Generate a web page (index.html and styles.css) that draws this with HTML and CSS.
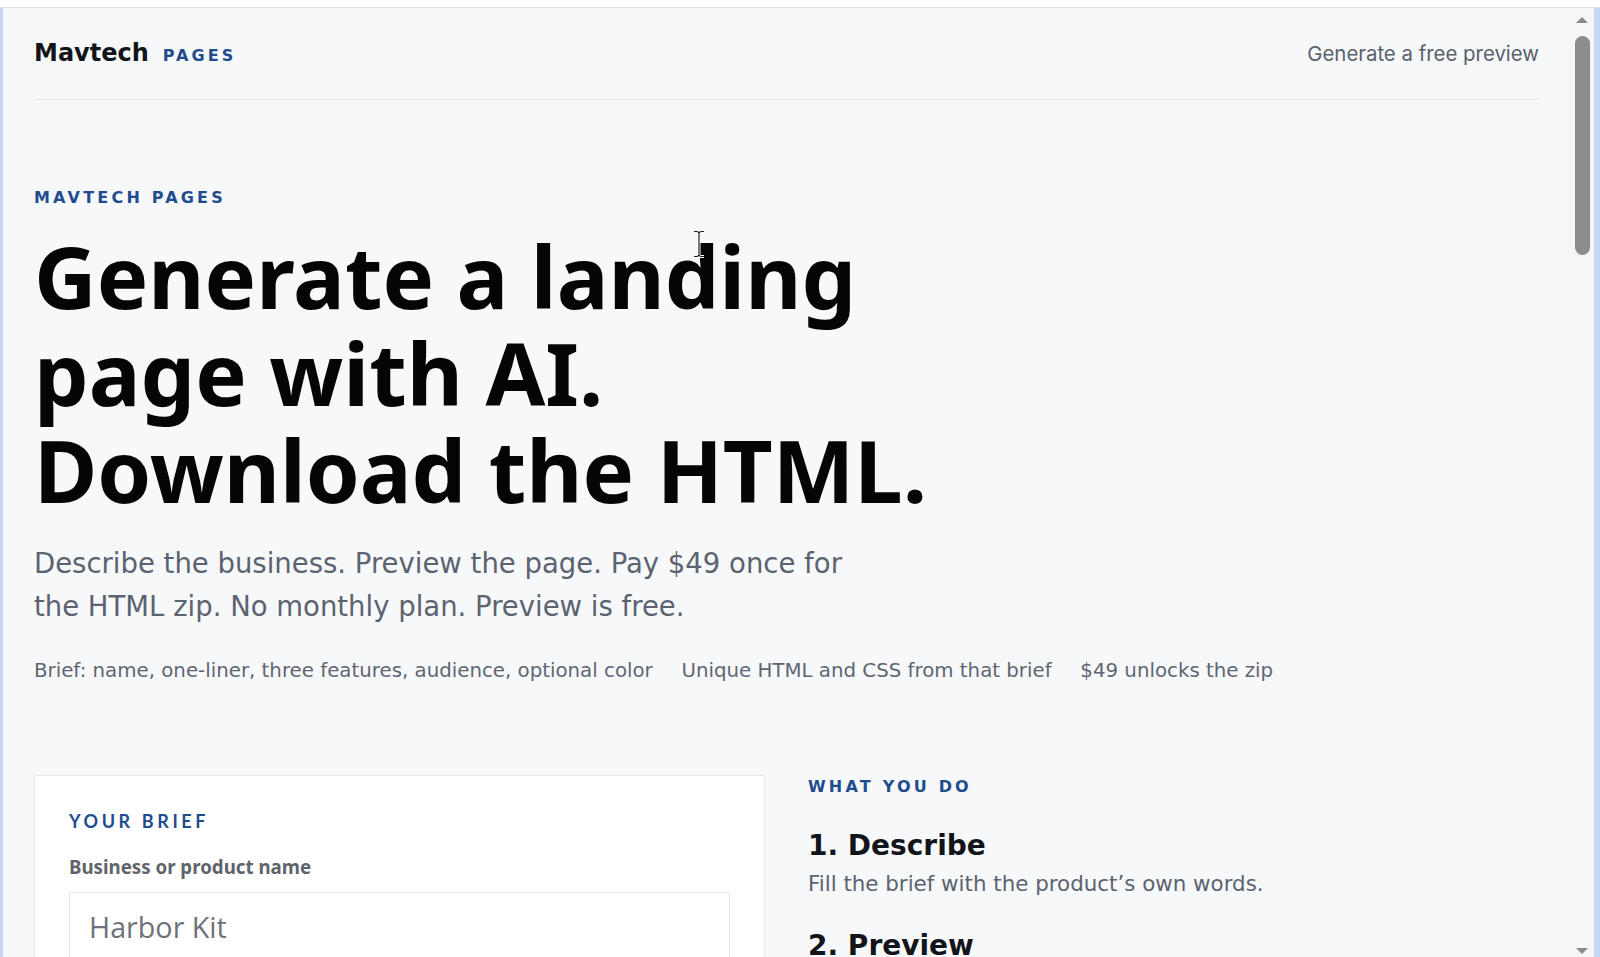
FILE: index.html
```html
<!DOCTYPE html>
<html lang="en">
<head>
<meta charset="utf-8">
<title>Mavtech Pages</title>
<link rel="stylesheet" href="styles.css">
</head>
<body>
<div class="frame">
  <div class="topbar"></div>
  <div class="window">
    <div class="edge-left"></div>
    <div class="viewport">
      <div class="page">
        <header class="site-header">
          <div class="brand">
            <span class="brand-name">Mavtech</span>
            <span class="brand-tag">PAGES</span>
          </div>
          <a class="nav-link" href="#brief">Generate a free preview</a>
        </header>

        <section class="hero">
          <p class="eyebrow">MAVTECH PAGES</p>
          <h1 class="headline">Generate a landing<br>page with AI.<br>Download the HTML.</h1>
          <p class="lead">Describe the business. Preview the page. Pay $49 once for the HTML zip. No monthly plan. Preview is free.</p>
          <ul class="chips">
            <li>Brief: name, one-liner, three features, audience, optional color</li>
            <li>Unique HTML and CSS from that brief</li>
            <li>$49 unlocks the zip</li>
          </ul>
        </section>

        <section class="work">
          <form class="card" id="brief">
            <p class="card-eyebrow">YOUR BRIEF</p>
            <label class="field-label" for="name">Business or product name</label>
            <input class="field-input" id="name" type="text" placeholder="Harbor Kit">
          </form>
          <div class="steps">
            <p class="eyebrow">WHAT YOU DO</p>
            <h3 class="step-title">1. Describe</h3>
            <p class="step-text">Fill the brief with the product’s own words.</p>
            <h3 class="step-title">2. Preview</h3>
          </div>
        </section>
      </div>
      <svg class="cursor" width="14" height="28" viewBox="0 0 14 28" aria-hidden="true">
        <path d="M2 1.5h3.5L7 3l1.5-1.5H12M7 3v22M2 26.5h3.5L7 25l1.5 1.5H12" fill="none" stroke="#fff" stroke-width="3"/>
        <path d="M2 1.5h3.5L7 3l1.5-1.5H12M7 3v22M2 26.5h3.5L7 25l1.5 1.5H12" fill="none" stroke="#222" stroke-width="1.2"/>
      </svg>
    </div>
    <div class="scrollbar" aria-hidden="true">
      <span class="arrow-up"></span>
      <span class="thumb"></span>
      <span class="track"></span>
      <span class="arrow-down"></span>
    </div>
    <div class="edge-right"></div>
  </div>
</div>
</body>
</html>
```

FILE: styles.css
```css
* { box-sizing: border-box; }

html, body {
  margin: 0;
  height: 100%;
  overflow: hidden;
}

body {
  background: #ffffff;
  font-family: "DejaVu Sans", Verdana, sans-serif;
  color: #111418;
}

.frame {
  display: flex;
  flex-direction: column;
  height: 100%;
}

.topbar {
  flex: none;
  height: 8px;
  background: #ffffff;
  border-bottom: 1px solid #dcdfe4;
}

.window {
  flex: 1;
  min-height: 0;
  display: flex;
  background: #f7f8fa;
}

.edge-left {
  flex: none;
  width: 3px;
  background: #c9d7f7;
}

.edge-right {
  flex: none;
  width: 6px;
  background: #c9d7f7;
}

.viewport {
  flex: 1;
  min-width: 0;
  overflow: hidden;
  position: relative;
}

.page {
  padding: 0 29px 0 31px;
}

/* header */
.site-header {
  display: flex;
  justify-content: space-between;
  align-items: baseline;
  padding: 31px 0 32px;
  border-bottom: 1px solid #e4e6ea;
}

.brand {
  display: flex;
  align-items: baseline;
  gap: 14px;
}

.brand-name {
  font-size: 24px;
  font-weight: 700;
  color: #111418;
}

.brand-tag {
  font-size: 16px;
  font-weight: 700;
  letter-spacing: 0.19em;
  color: #1f4b8f;
}

.nav-link {
  font-family: Inter, "Noto Sans", sans-serif;
  font-size: 20.4px;
  color: #5a616b;
  text-decoration: none;
}

/* hero */
.hero {
  padding-top: 88px;
}

.eyebrow {
  margin: 0;
  font-size: 16px;
  font-weight: 700;
  letter-spacing: 0.2em;
  color: #1f4b8f;
}

.headline {
  margin: 21px 0 0;
  font-family: "Noto Sans", Inter, sans-serif;
  font-size: 86.5px;
  font-weight: 700;
  line-height: 96.8px;
  color: #050505;
}

.lead {
  margin: 24px 0 0;
  max-width: 850px;
  font-size: 27.5px;
  line-height: 43px;
  color: #5c6370;
}

.chips {
  margin: 31px 0 0;
  padding: 0;
  list-style: none;
  display: flex;
  gap: 28.7px;
  font-size: 19.8px;
  color: #5f6672;
}

/* work area */
.work {
  margin-top: 93px;
  display: grid;
  grid-template-columns: 1fr 1fr;
  gap: 43px;
  align-items: start;
}

.card {
  margin: 0;
  background: #ffffff;
  border: 1px solid #e5e7eb;
  padding: 34px 34px 40px;
}

.card-eyebrow {
  margin: 0;
  font-family: Lato, "Noto Sans", sans-serif;
  font-size: 18px;
  font-weight: 700;
  letter-spacing: 0.2em;
  color: #1f4b8f;
}

.field-label {
  display: block;
  margin-top: 22px;
  font-family: "Noto Sans", Inter, sans-serif;
  font-size: 18.7px;
  font-weight: 700;
  color: #5f646c;
}

.field-input {
  display: block;
  width: 100%;
  margin-top: 13px;
  padding: 14px 19px;
  border: 1px solid #e3e5e8;
  border-radius: 0;
  background: #ffffff;
  font-family: "Open Sans", "Noto Sans", sans-serif;
  font-size: 28.7px;
  color: #3a3f46;
  outline: none;
}

.field-input::placeholder {
  color: #6d727a;
  opacity: 1;
}

.steps {
  padding-top: 2px;
}

.step-title {
  margin: 33px 0 0;
  font-size: 28px;
  font-weight: 700;
  color: #111418;
}

.step-text {
  margin: 9px 0 0;
  font-size: 21.4px;
  color: #5c6370;
}

/* mouse pointer resting over the headline */
.cursor {
  position: absolute;
  left: 689px;
  top: 222px;
}

/* window scrollbar */
.scrollbar {
  flex: none;
  width: 26px;
  display: flex;
  flex-direction: column;
  align-items: center;
  padding: 9px 0 3px 2px;
  background: #f5f6f8;
}

.arrow-up {
  width: 0;
  height: 0;
  border-left: 6px solid transparent;
  border-right: 6px solid transparent;
  border-bottom: 6px solid #8a8a8a;
}

.arrow-down {
  width: 0;
  height: 0;
  border-left: 6px solid transparent;
  border-right: 6px solid transparent;
  border-top: 6px solid #8a8a8a;
}

.thumb {
  margin-top: 13px;
  width: 15px;
  height: 219px;
  border-radius: 8px;
  background: #8c8c8c;
}

.track {
  flex: 1;
}
```
